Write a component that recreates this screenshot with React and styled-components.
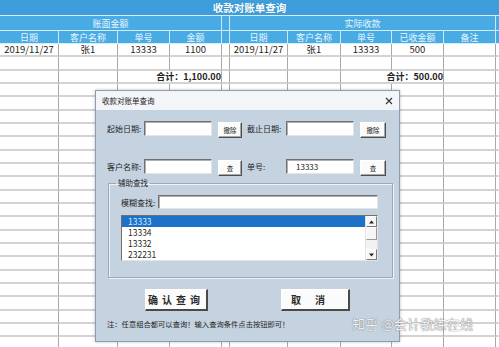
import { createGlobalStyle } from "styled-components";
import styled from "styled-components";

const GlobalStyle = createGlobalStyle`
  html, body {
    margin: 0;
    padding: 0;
    background: #ffffff;
  }
  body {
    font-family: "Noto Sans CJK SC", "Noto Sans", "Liberation Sans", sans-serif;
  }
`;

const Page = styled.div`
  position: relative;
  width: 499px;
  height: 347px;
  overflow: hidden;
  background: #f4f4f4;
`;

const SheetTitle = styled.div`
  height: 15px;
  border-bottom: 1px solid #d6ecf8;
  background: #3d9edb;
  color: #ffffff;
  font-size: 10.5px;
  font-weight: 700;
  line-height: 15px;
  text-align: center;
  text-shadow: 0 0 1px #2a78aa;
`;

const Grid = styled.div`
  display: grid;
  grid-template-columns: 59px 59px 52px 52px 8px 58px 53px 51px 52px 52px 1fr;
  grid-template-rows: 15px 13px;
  grid-auto-rows: 13.33px;
  background: #ffffff;
`;

const Cell = styled.div`
  grid-column: span ${(p) => p.$span || 1};
  display: flex;
  align-items: center;
  justify-content: ${(p) => (p.$right ? "flex-end" : "center")};
  box-sizing: border-box;
  border-right: ${(p) => (p.$last ? "none" : p.$head ? "1px solid #cfe7f6" : "1px solid #a8a8a8")};
  border-bottom: ${(p) => (p.$head ? "1px solid #d6ecf8" : "2px solid #d3d3d3")};
  background: ${(p) => (p.$head ? "#48abe3" : "#ffffff")};
  color: ${(p) => (p.$head ? "#eaf6fd" : "#1e1e1e")};
  font-size: ${(p) => (p.$head ? "9px" : p.$bold ? "9px" : "9.5px")};
  font-weight: ${(p) => (p.$bold ? 700 : 400)};
  white-space: nowrap;
  line-height: 1;
`;

const header1 = [
  { text: "账面金额", span: 4 },
  { text: "" },
  { text: "实际收款", span: 5 },
  { text: "", last: true },
];
const header2 = ["日期", "客户名称", "单号", "金额", "", "日期", "客户名称", "单号", "已收金额", "备注"];
const dataRow = ["2019/11/27", "张1", "13333", "1100", "", "2019/11/27", "张1", "13333", "500", ""];

const Dialog = styled.div`
  position: absolute;
  left: 95px;
  top: 90px;
  width: 305px;
  height: 252px;
  box-sizing: border-box;
  border: 1px solid #8d9cae;
  box-shadow: 0 0 3px rgba(0, 0, 0, 0.25);
  background: #c5d3e1;
  display: flex;
  flex-direction: column;
`;

const DialogHead = styled.div`
  height: 19px;
  background: #f3f5f8;
  display: flex;
  align-items: center;
  justify-content: space-between;
  padding: 0 6px 0 6px;
  font-size: 7.5px;
  color: #222;
`;

const Body = styled.div`
  display: flex;
  flex-direction: column;
  padding-left: 11px;
`;

const Row = styled.div`
  display: flex;
  align-items: center;
  height: 17px;
  margin-top: ${(p) => p.$top}px;
`;

const Label = styled.div`
  width: ${(p) => p.$w}px;
  font-size: 8px;
  color: #1f1f1f;
  white-space: nowrap;
  margin-left: ${(p) => p.$ml || 0}px;
`;

const Field = styled.div`
  width: ${(p) => p.$w}px;
  height: ${(p) => p.$h || 15}px;
  box-sizing: border-box;
  background: #ffffff;
  border: 1px solid;
  border-color: #707070 #e4e4e4 #e4e4e4 #707070;
  box-shadow: inset 1px 1px 0 #b0b0b0;
  font-size: 8px;
  color: #222;
  padding-left: 9px;
  display: flex;
  align-items: center;
`;

const SmallBtn = styled.div`
  width: ${(p) => p.$w}px;
  height: 16px;
  margin-left: 6px;
  box-sizing: border-box;
  background: #fbfbfb;
  border: 1px solid;
  border-color: #ffffff #4e4e4e #4e4e4e #ffffff;
  box-shadow: inset -1px -1px 0 #a8a8a8;
  font-size: 6.5px;
  color: #222;
  display: flex;
  align-items: center;
  justify-content: center;
  margin-top: 2px;
`;

const Group = styled.fieldset`
  margin: 3px 0 0 1px;
  width: 285px;
  box-sizing: border-box;
  padding: 7px 0 16px 12px;
  border: 1px solid #9aa9ba;
  box-shadow: inset 1px 1px 0 #eef3f8, 1px 1px 0 #eef3f8;
  legend {
    font-size: 7.5px;
    line-height: 10px;
    padding: 0 2px;
    margin-left: -5px;
    color: #1f1f1f;
  }
`;

const FuzzyRow = styled.div`
  display: flex;
  align-items: center;
  height: 14px;
`;

const ListBox = styled.div`
  margin-top: 6px;
  width: 257px;
  height: 46px;
  box-sizing: border-box;
  background: #ffffff;
  border: 1px solid;
  border-color: #707070 #e4e4e4 #e4e4e4 #707070;
  display: flex;
`;

const Items = styled.div`
  flex: 1;
  display: flex;
  flex-direction: column;
`;

const Item = styled.div`
  height: 11px;
  display: flex;
  align-items: center;
  font-size: 8.5px;
  line-height: 1;
  padding-left: 6px;
  color: ${(p) => (p.$active ? "#d6ebff" : "#1f1f1f")};
  background: ${(p) => (p.$active ? "#1b72c8" : "transparent")};
`;

const ScrollBar = styled.div`
  width: 11px;
  display: flex;
  flex-direction: column;
  background: #f2f2f2;
  border-left: 1px solid #e0e0e0;
`;

const Arrow = styled.div`
  height: 11px;
  box-sizing: border-box;
  border: 1px solid;
  border-color: #ffffff #7a7a7a #7a7a7a #ffffff;
  background: #f6f6f6;
  display: flex;
  align-items: center;
  justify-content: center;
`;

const Thumb = styled.div`
  height: 13px;
  box-sizing: border-box;
  border: 1px solid;
  border-color: #ffffff #9a9a9a #9a9a9a #ffffff;
  background: #f6f6f6;
`;

const Track = styled.div`
  flex: 1;
`;

const ButtonRow = styled.div`
  display: flex;
  margin-top: 11px;
  padding-left: 38px;
  gap: 73px;
`;

const BigBtn = styled.div`
  width: ${(p) => p.$w}px;
  height: 22px;
  box-sizing: border-box;
  background: #fbfbfb;
  border-style: solid;
  border-width: 1px 2px 2px 1px;
  border-color: #ffffff #4a4a4a #4a4a4a #ffffff;
  font-size: 10px;
  font-weight: 700;
  color: #2a2a2a;
  letter-spacing: ${(p) => p.$ls}px;
  display: flex;
  align-items: center;
  justify-content: center;
`;

const Note = styled.div`
  margin-top: 8px;
  font-size: 7.3px;
  line-height: 10px;
  color: #1f1f1f;
  white-space: nowrap;
`;

const Watermark = styled.div`
  position: absolute;
  left: 352px;
  top: 314px;
  font-size: 13px;
  color: rgba(255, 255, 255, 0.92);
  white-space: nowrap;
  text-shadow: 0 0 1px #7b7b7b, 0 0 1px #7b7b7b;
  letter-spacing: 0.2px;
`;

function Caret({ down }) {
  return (
    <svg width="5" height="4" viewBox="0 0 5 4">
      <path d={down ? "M0 0.5 H5 L2.5 3.5 Z" : "M0 3.5 H5 L2.5 0.5 Z"} fill="#222" />
    </svg>
  );
}

export default function App() {
  const filler = Array.from({ length: 20 });
  return (
    <Page>
      <GlobalStyle />
      <SheetTitle>收款对账单查询</SheetTitle>
      <Grid>
        {header1.map((c, i) => (
          <Cell key={"h1" + i} $head $span={c.span} $last={c.last}>
            {c.text}
          </Cell>
        ))}
        {header2.map((t, i) => (
          <Cell key={"h2" + i} $head>
            {t}
          </Cell>
        ))}
        <Cell $head $last />
        {dataRow.map((t, i) => (
          <Cell key={"d" + i}>{t}</Cell>
        ))}
        <Cell $last />
        {Array.from({ length: 11 }).map((_, i) => (
          <Cell key={"b" + i} $last={i === 10} />
        ))}
        <Cell />
        <Cell />
        <Cell $span={2} $right $bold>
          合计：1,100.00
        </Cell>
        <Cell />
        <Cell />
        <Cell />
        <Cell $span={2} $right $bold>
          合计：500.00
        </Cell>
        <Cell />
        <Cell $last />
        {filler.map((_, r) =>
          Array.from({ length: 11 }).map((__, i) => (
            <Cell key={"f" + r + "-" + i} $last={i === 10} />
          ))
        )}
      </Grid>

      <Dialog>
        <DialogHead>
          <span>收款对账单查询</span>
          <svg width="8" height="8" viewBox="0 0 8 8">
            <path d="M1 1 L7 7 M7 1 L1 7" stroke="#333" strokeWidth="1.1" />
          </svg>
        </DialogHead>
        <Body>
          <Row $top={10}>
            <Label $w={37}>起始日期:</Label>
            <Field $w={68} />
            <SmallBtn $w={24}>撤除</SmallBtn>
            <Label $w={39} $ml={5}>截止日期:</Label>
            <Field $w={68} />
            <SmallBtn $w={26}>撤除</SmallBtn>
          </Row>
          <Row $top={21}>
            <Label $w={37}>客户名称:</Label>
            <Field $w={68} />
            <SmallBtn $w={24}>查</SmallBtn>
            <Label $w={39} $ml={5}>单号:</Label>
            <Field $w={68}>13333</Field>
            <SmallBtn $w={26}>查</SmallBtn>
          </Row>
          <Group>
            <legend>辅助查找</legend>
            <FuzzyRow>
              <Label $w={37}>模糊查找:</Label>
              <Field $w={220} $h={14} />
            </FuzzyRow>
            <ListBox>
              <Items>
                <Item $active>13333</Item>
                <Item>13334</Item>
                <Item>13332</Item>
                <Item>232231</Item>
              </Items>
              <ScrollBar>
                <Arrow>
                  <Caret />
                </Arrow>
                <Thumb />
                <Track />
                <Arrow>
                  <Caret down />
                </Arrow>
              </ScrollBar>
            </ListBox>
          </Group>
          <ButtonRow>
            <BigBtn $w={63} $ls={4}>确认查询</BigBtn>
            <BigBtn $w={69} $ls={14}>取消</BigBtn>
          </ButtonRow>
          <Note>注：任意组合都可以查询！输入查询条件点击按钮即可！</Note>
        </Body>
      </Dialog>
      <Watermark>知乎 @会计教练在线</Watermark>
    </Page>
  );
}
